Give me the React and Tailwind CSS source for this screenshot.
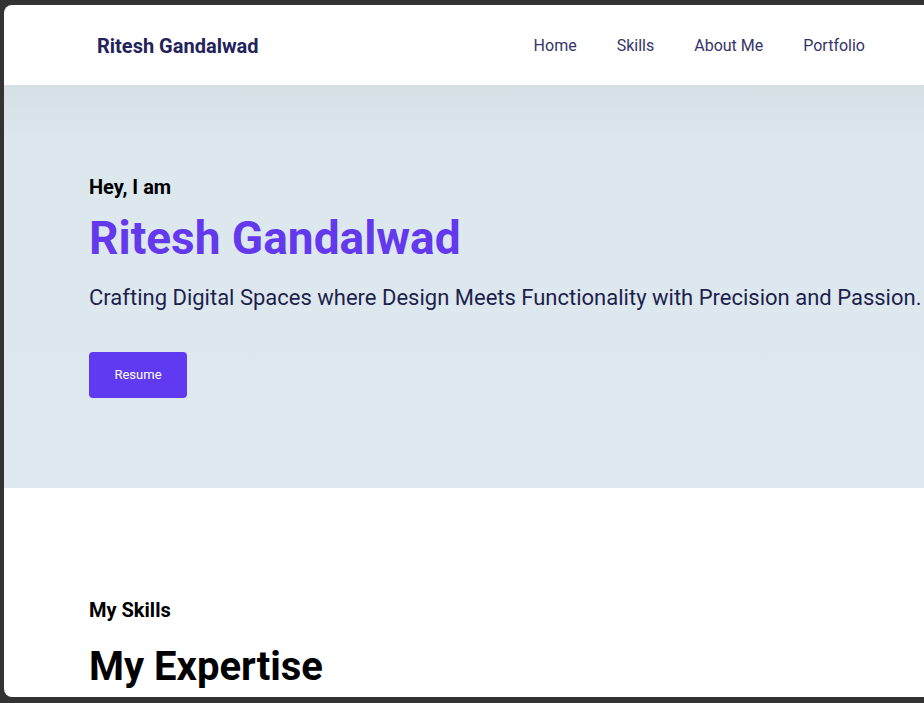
import React from 'react';

const NavLink = ({ children }) => (
  <a href="#" className="text-[16px] text-[#34346a]">{children}</a>
);

const App = () => {
  return (
    <div className="h-screen w-full bg-[#333333] pt-[5px] pl-[4px] pb-[6px] font-['Roboto',sans-serif] overflow-hidden">
      <div className="h-full bg-white rounded-l-[8px] overflow-hidden flex flex-col">
        <nav className="h-[80px] flex-shrink-0 flex items-center pt-[2px] pl-[93px] pr-[59px]">
          <h1 className="text-[20px] font-bold text-[#23235b]">Ritesh Gandalwad</h1>
          <div className="ml-auto flex items-center gap-10">
            <NavLink>Home</NavLink>
            <NavLink>Skills</NavLink>
            <NavLink>About Me</NavLink>
            <NavLink>Portfolio</NavLink>
          </div>
        </nav>

        <section className="h-[403px] flex-shrink-0 bg-gradient-to-b from-[#d4e0e4] via-[#dce8ed] via-[15%] to-[#dde9ee] pl-[85px] pt-[88px]">
          <p className="text-[20px] font-bold text-black leading-[28px]">Hey, I am</p>
          <h2 className="text-[46px] font-bold text-[#6439ee] leading-[54px] mt-[10px]">Ritesh Gandalwad</h2>
          <p className="text-[22px] text-[#1f1f4d] whitespace-nowrap mt-[18px] leading-[30px]">
            Crafting Digital Spaces where Design Meets Functionality with Precision and Passion.
          </p>
          <button className="mt-[39px] w-[98px] h-[46px] rounded-[4px] bg-[#603af0] text-white text-[13px]">
            Resume
          </button>
        </section>

        <section className="flex-1 pl-[85px] pt-[108px]">
          <p className="text-[20px] font-bold text-black leading-[28px]">My Skills</p>
          <h3 className="text-[40px] font-bold text-black leading-[48px] mt-[19px]">My Expertise</h3>
        </section>
      </div>
    </div>
  );
};

export default App;
